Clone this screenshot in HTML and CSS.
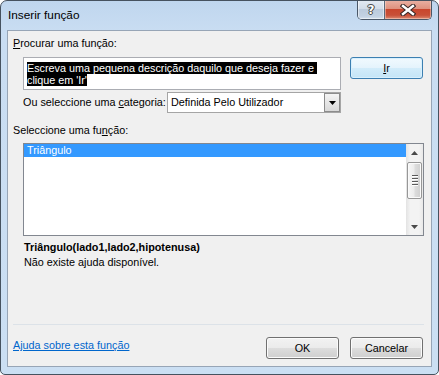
FILE: index.html
```html
<!DOCTYPE html>
<html lang="pt">
<head>
<meta charset="utf-8">
<title>Inserir função</title>
<link rel="stylesheet" href="styles.css">
</head>
<body>
<div class="window">
  <div class="titlebar">
    <span class="title">Inserir função</span>
    <div class="caption">
      <div class="cap-btn help"><span class="q">?</span></div>
      <div class="cap-btn close">
        <svg width="16" height="12" viewBox="0 0 16 12">
          <path d="M3 2 L13 10 M13 2 L3 10" stroke="#3b2a28" stroke-width="4.6" stroke-linecap="square" fill="none"/>
          <path d="M3 2 L13 10 M13 2 L3 10" stroke="#ffffff" stroke-width="2.4" stroke-linecap="square" fill="none"/>
        </svg>
      </div>
    </div>
  </div>
  <div class="client">
    <div class="label"><u>P</u>rocurar uma função:</div>
    <div class="search-row">
      <div class="textbox">
        <div class="sel-line">Escreva uma pequena descrição daquilo que deseja fazer e </div>
        <div class="sel-line">clique em 'Ir'</div>
      </div>
      <div class="btn btn-default"><span><u>I</u>r</span></div>
    </div>
    <div class="cat-row">
      <div class="cat-label">Ou seleccione uma <u>c</u>ategoria:</div>
      <div class="combo">
        <span class="combo-text">Definida Pelo Utilizador</span>
        <span class="combo-arrow">
          <svg width="7" height="4" viewBox="0 0 7 4"><path d="M0 0 H7 L3.5 4 Z" fill="#000"/></svg>
        </span>
      </div>
    </div>
    <div class="label label2">Seleccione uma fu<u>n</u>ção:</div>
    <div class="listbox">
      <div class="list-items">
        <div class="item selected">Triângulo</div>
      </div>
      <div class="scrollbar">
        <div class="sb-arrow">
          <svg width="7" height="4" viewBox="0 0 7 4"><path d="M0 4 H7 L3.5 0 Z" fill="#4a4a4a"/></svg>
        </div>
        <div class="sb-thumb">
          <div class="grip"></div><div class="grip"></div><div class="grip"></div><div class="grip"></div>
        </div>
        <div class="sb-track"></div>
        <div class="sb-arrow">
          <svg width="7" height="4" viewBox="0 0 7 4"><path d="M0 0 H7 L3.5 4 Z" fill="#4a4a4a"/></svg>
        </div>
      </div>
    </div>
    <div class="desc">
      <div class="sig">Triângulo(lado1,lado2,hipotenusa)</div>
      <div>Não existe ajuda disponível.</div>
    </div>
    <div class="spacer"></div>
    <div class="separator"></div>
    <div class="footer">
      <a class="link" href="#">Ajuda sobre esta função</a>
      <div class="buttons">
        <div class="btn">OK</div>
        <div class="btn">Cancelar</div>
      </div>
    </div>
  </div>
</div>
</body>
</html>
```
FILE: styles.css
```css
html, body {
  margin: 0;
  padding: 0;
  background: #ffffff;
}
body {
  font-family: "Liberation Sans", Arial, sans-serif;
  font-size: 10.8px;
  color: #000;
}
u {
  text-decoration: underline;
  text-underline-offset: 1px;
}
.window {
  width: 439px;
  height: 375px;
  box-sizing: border-box;
  border: 1px solid #46525f;
  border-radius: 7px 7px 5px 5px;
  padding: 0 6px 7px 6px;
  background: linear-gradient(to bottom, #bfd6ee 0px, #c9ddf2 30px, #cbdff3 100%);
  display: flex;
  flex-direction: column;
  overflow: hidden;
}
.titlebar {
  height: 29px;
  flex: none;
  display: flex;
  justify-content: space-between;
  align-items: flex-start;
}
.title {
  font-size: 11.8px;
  line-height: 14px;
  margin: 7px 0 0 1px;
  color: #000;
}
.caption {
  display: flex;
  margin-top: -1px;
  width: 75px;
  height: 20px;
  box-sizing: border-box;
  border: 1px solid #4a5767;
  border-top: none;
  border-radius: 0 0 5px 5px;
  overflow: hidden;
}
.cap-btn {
  display: flex;
  align-items: center;
  justify-content: center;
}
.help {
  width: 26px;
  border-right: 1px solid #5b6a7c;
  background: linear-gradient(to bottom, #e4ebf3 0%, #d3dde9 45%, #bccbdc 50%, #c3d2e2 85%, #d4e0ec 100%);
  box-shadow: inset 0 0 0 1px rgba(255,255,255,0.5);
}
.q {
  font-family: "DejaVu Sans", sans-serif;
  font-weight: bold;
  font-size: 12px;
  line-height: 12px;
  color: #fff;
  text-shadow: 0 0 1px #333, 0 0 1px #333, 1px 0 0 #555, -1px 0 0 #555, 0 1px 0 #555, 0 -1px 0 #555;
}
.close {
  flex: 1;
  background: linear-gradient(to bottom, #eab2a4 0%, #df927f 45%, #c9462d 50%, #c85038 80%, #dc8a72 100%);
  box-shadow: inset 0 0 0 1px rgba(255,230,220,0.45);
}
.client {
  flex: 1;
  min-height: 0;
  border: 1px solid #97a5b6;
  background: #f0f0f0;
  padding: 6px 7px 7px 5px;
  display: flex;
  flex-direction: column;
}
.label {
  line-height: 13px;
  height: 13px;
  white-space: nowrap;
}
.search-row {
  display: flex;
  align-items: flex-start;
  gap: 9px;
  margin: 7px 0 0 10px;
}
.textbox {
  width: 318px;
  height: 33px;
  box-sizing: border-box;
  border: 1px solid #abadb3;
  background: #fff;
  padding: 4px 0 0 3px;
}
.sel-line {
  width: fit-content;
  height: 12px;
  line-height: 12px;
  background: #000;
  color: #fff;
  white-space: pre;
}
.btn {
  box-sizing: border-box;
  width: 73px;
  height: 22px;
  border: 1px solid #707070;
  border-radius: 3px;
  display: flex;
  align-items: center;
  justify-content: center;
  line-height: 13px;
  background: linear-gradient(to bottom, #f2f2f2 0%, #ebebeb 50%, #dddddd 50%, #cfcfcf 100%);
  box-shadow: inset 0 0 0 1px #fbfbfb;
}
.btn-default {
  border-color: #3c7fb1;
  background: linear-gradient(to bottom, #f1f9fe 0%, #e4f3fc 50%, #d2ecfa 50%, #c4e5f7 100%);
  box-shadow: inset 0 0 0 1px #d8f0fd;
}
.cat-row {
  display: flex;
  align-items: center;
  margin: 2px 0 0 10px;
}
.cat-label {
  width: 144px;
  flex: none;
  line-height: 13px;
  white-space: nowrap;
}
.combo {
  width: 174px;
  height: 21px;
  box-sizing: border-box;
  border: 1px solid #a5a5a5;
  background: #fff;
  display: flex;
}
.combo-text {
  flex: 1;
  padding-left: 3px;
  line-height: 19px;
  white-space: nowrap;
}
.combo-arrow {
  width: 16px;
  box-sizing: border-box;
  border: 1px solid #8c8c8c;
  background: linear-gradient(to bottom, #f4f4f4, #d9d9d9);
  display: flex;
  align-items: center;
  justify-content: center;
}
.label2 {
  margin-top: 11px;
}
.listbox {
  margin: 6px 0 0 10px;
  width: 401px;
  height: 93px;
  flex: none;
  box-sizing: border-box;
  border: 1px solid #828790;
  background: #fff;
  display: flex;
}
.list-items {
  flex: 1;
}
.item {
  height: 13px;
  line-height: 13px;
  padding-left: 3px;
  white-space: nowrap;
}
.item.selected {
  background: #3399ff;
  color: #fff;
}
.scrollbar {
  width: 17px;
  display: flex;
  flex-direction: column;
  background: linear-gradient(to right, #e3e3e3 0%, #f3f3f3 25%, #f3f3f3 75%, #e9e9e9 100%);
}
.sb-arrow {
  height: 17px;
  flex: none;
  display: flex;
  align-items: center;
  justify-content: center;
}
.sb-thumb {
  height: 37px;
  flex: none;
  margin: 1px 1px 0 1px;
  box-sizing: border-box;
  border: 1px solid #979797;
  border-radius: 2px;
  background: linear-gradient(to right, #f7f7f7 0%, #ececec 45%, #dcdcdc 55%, #cfcfcf 100%);
  box-shadow: inset 0 0 0 1px #fafafa;
  display: flex;
  flex-direction: column;
  align-items: center;
  justify-content: center;
  gap: 1px;
}
.grip {
  width: 6px;
  height: 1px;
  background: #5a5a5a;
  border-bottom: 1px solid #fff;
}
.sb-track {
  flex: 1;
}
.desc {
  margin: 4px 0 0 11px;
  line-height: 15px;
  white-space: nowrap;
}
.sig {
  font-weight: bold;
}
.spacer {
  flex: 1;
}
.separator {
  flex: none;
  height: 1px;
  background: #dce2e8;
}
.footer {
  flex: none;
  display: flex;
  justify-content: space-between;
  align-items: flex-start;
  margin-top: 12px;
  height: 22px;
}
.link {
  color: #0066cc;
  text-decoration: underline;
  line-height: 13px;
  margin-top: 2px;
  white-space: nowrap;
}
.buttons {
  display: flex;
  gap: 11px;
  margin-right: 1px;
}
```
